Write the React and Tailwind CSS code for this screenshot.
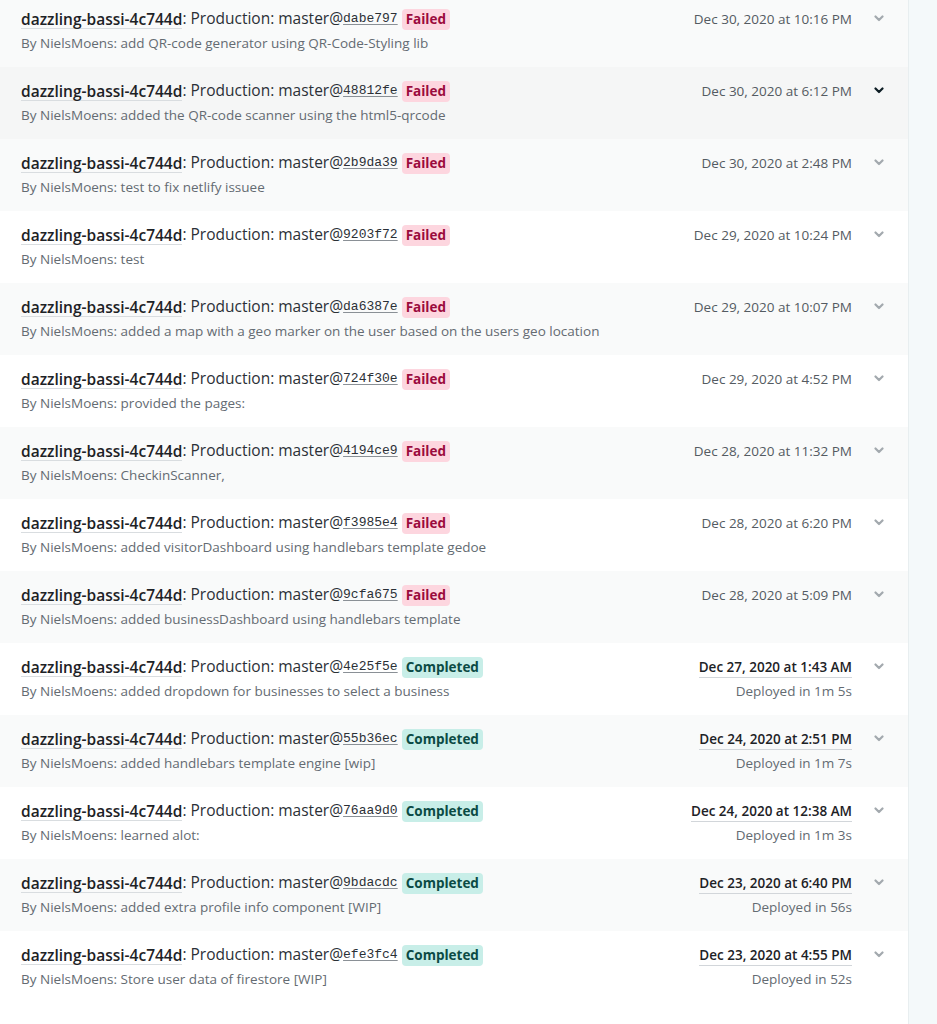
const DEPLOYS = [
  { sha: "dabe797", msg: "add QR-code generator using QR-Code-Styling lib", date: "Dec 30, 2020 at 10:16 PM", ok: false },
  { sha: "48812fe", msg: "added the QR-code scanner using the html5-qrcode", date: "Dec 30, 2020 at 6:12 PM", ok: false, hover: true },
  { sha: "2b9da39", msg: "test to fix netlify issuee", date: "Dec 30, 2020 at 2:48 PM", ok: false },
  { sha: "9203f72", msg: "test", date: "Dec 29, 2020 at 10:24 PM", ok: false },
  { sha: "da6387e", msg: "added a map with a geo marker on the user based on the users geo location", date: "Dec 29, 2020 at 10:07 PM", ok: false },
  { sha: "724f30e", msg: "provided the pages:", date: "Dec 29, 2020 at 4:52 PM", ok: false },
  { sha: "4194ce9", msg: "CheckinScanner,", date: "Dec 28, 2020 at 11:32 PM", ok: false },
  { sha: "f3985e4", msg: "added visitorDashboard using handlebars template gedoe", date: "Dec 28, 2020 at 6:20 PM", ok: false },
  { sha: "9cfa675", msg: "added businessDashboard using handlebars template", date: "Dec 28, 2020 at 5:09 PM", ok: false },
  { sha: "4e25f5e", msg: "added dropdown for businesses to select a business", date: "Dec 27, 2020 at 1:43 AM", ok: true, took: "1m 5s" },
  { sha: "55b36ec", msg: "added handlebars template engine [wip]", date: "Dec 24, 2020 at 2:51 PM", ok: true, took: "1m 7s" },
  { sha: "76aa9d0", msg: "learned alot:", date: "Dec 24, 2020 at 12:38 AM", ok: true, took: "1m 3s" },
  { sha: "9bdacdc", msg: "added extra profile info component [WIP]", date: "Dec 23, 2020 at 6:40 PM", ok: true, took: "56s" },
  { sha: "efe3fc4", msg: "Store user data of firestore [WIP]", date: "Dec 23, 2020 at 4:55 PM", ok: true, took: "52s" },
];

function Chevron({ dark }) {
  return (
    <svg width="10" height="7" viewBox="0 0 10 7" className={dark ? "text-[#0e1e25]" : "text-[#a3a9ae]"}>
      <path d="M1.5 1.5 L5 5 L8.5 1.5" fill="none" stroke="currentColor" strokeWidth="2.2" strokeLinecap="round" strokeLinejoin="round" />
    </svg>
  );
}

function Row({ d, i }) {
  const bg = d.hover ? "bg-[#f5f6f6]" : i % 2 === 0 ? "bg-[#f9fafa]" : "bg-white";
  return (
    <div className={`h-[72px] flex pl-[21px] ${bg}`}>
      <div className="flex-1 min-w-0 pt-[14px]">
        <div className="flex items-center h-[20px] text-[15.5px] text-[#2b3036]">
          <span className="font-semibold text-[#1d2226] border-b border-[#d9dde0] leading-[18px]">dazzling-bassi-4c744d</span>
          <span>: Production: master@</span>
          <span className="font-['Liberation_Mono',monospace] text-[13px] underline decoration-[#8a9096] underline-offset-2 text-[#2b3036]">{d.sha}</span>
          {d.ok ? (
            <span className="ml-[4px] rounded-[4px] bg-[#c8eee8] text-[#0b4a44] font-bold text-[13.5px] px-[4px] leading-[21px]">Completed</span>
          ) : (
            <span className="ml-[4px] rounded-[4px] bg-[#fdd6df] text-[#9b0b3d] font-bold text-[13.5px] px-[4px] leading-[21px]">Failed</span>
          )}
        </div>
        <div className="mt-[4px] text-[13.5px] text-[#646b72] leading-[20px]">By NielsMoens: {d.msg}</div>
      </div>
      <div className="flex flex-col items-end pt-[14px]">
        {d.ok ? (
          <span className="text-[13.5px] leading-[20px] font-semibold text-[#1d2226] border-b border-[#d2d6da]">{d.date}</span>
        ) : (
          <span className="text-[13.5px] leading-[20px] text-[#545b62]">{d.date}</span>
        )}
        {d.ok && <span className="mt-[3px] text-[13.5px] leading-[20px] text-[#646b72]">Deployed in {d.took}</span>}
      </div>
      <div className="w-[56px] flex justify-center pt-[20px] pr-[2px]">
        <div className="h-[8px]"><Chevron dark={d.hover} /></div>
      </div>
    </div>
  );
}

export default function App() {
  return (
    <div className="flex bg-[#f4f9fa] font-['Open_Sans',sans-serif] overflow-hidden h-[1024px]">
      <div className="w-[909px] shrink-0 bg-white border-r border-[#e8eef0] -mt-[5px]">
        {DEPLOYS.map((d, i) => (
          <Row key={d.sha} d={d} i={i} />
        ))}
      </div>
      <div className="flex-1" />
    </div>
  );
}
